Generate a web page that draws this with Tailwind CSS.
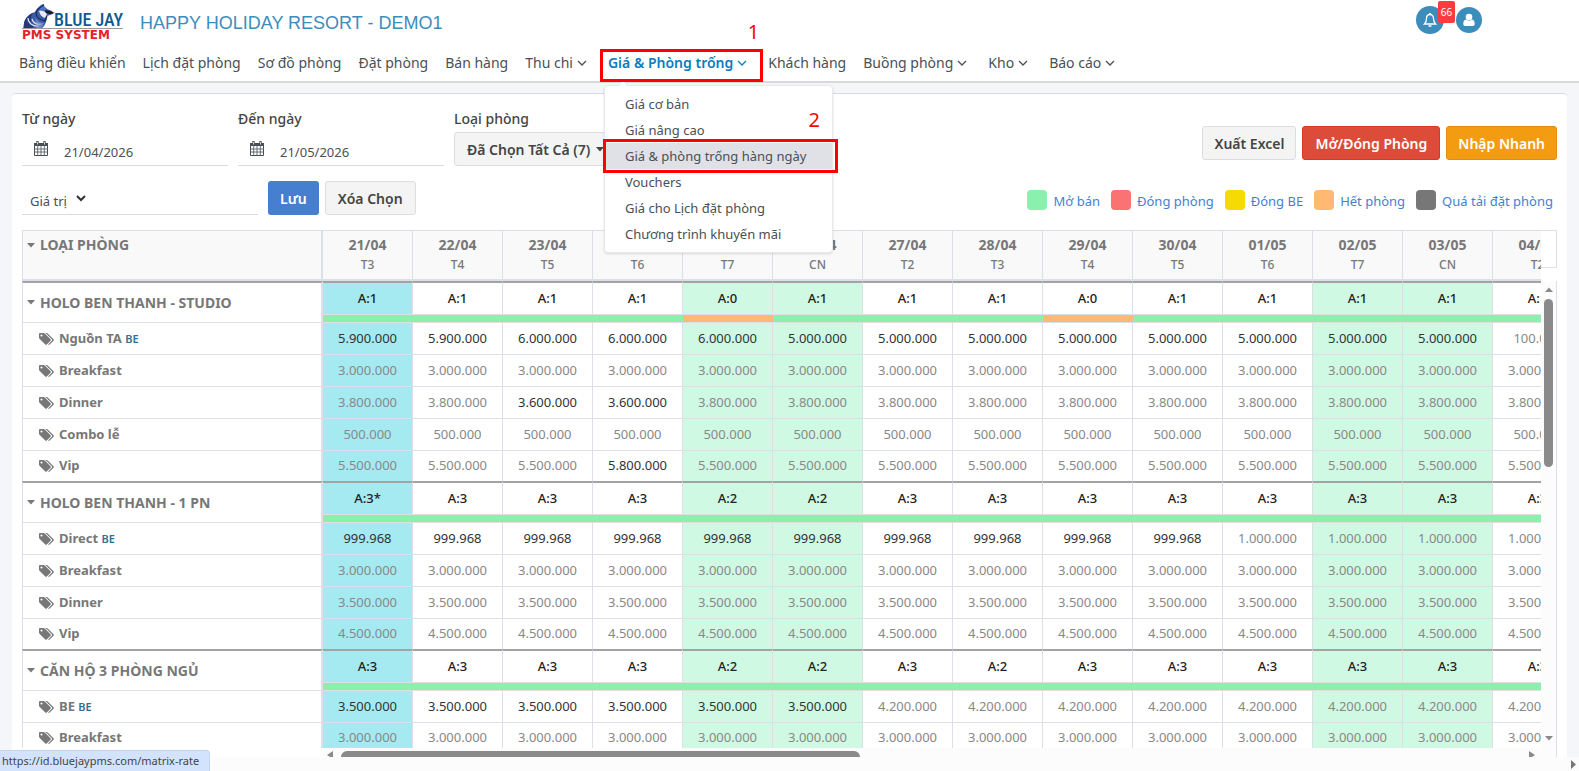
<!DOCTYPE html>
<html lang="vi">
<head>
    <meta charset="UTF-8">
    <meta name="viewport" content="width=device-width, initial-scale=1.0">
    <title>Giá &amp; phòng trống hàng ngày</title>
    <script src="https://cdn.jsdelivr.net/npm/@tailwindcss/browser@4"></script>
</head>
<body class="bg-[#f5f6fa] text-[#495057] font-['Noto_Sans',sans-serif] text-[13px]">
    <!-- Shared icons -->
    <svg class="hidden">
        <symbol id="chevron" viewBox="0 0 10 10"><path d="M1 3 5 7 9 3" fill="none" stroke="currentColor" stroke-width="1.300"/></symbol>
        <symbol id="caret" viewBox="0 0 8 5"><path d="M0 0h8L4 4.500z" fill="currentColor"/></symbol>
        <symbol id="calendar" viewBox="0 0 14 15">
            <path d="M.5 2.500h13v12H.5z" fill="#fff" stroke="currentColor"/>
            <path d="M0 2h14v3H0z" fill="currentColor"/>
            <path d="M3.500 0v4M10.500 0v4" stroke="currentColor" stroke-width="2.200"/>
            <path d="M3.500 1v2.500M10.500 1v2.500" stroke="#fff" stroke-width=".7"/>
            <path d="M3.700 5v9M7 5v9M10.300 5v9M1 8h12M1 11h12" stroke="currentColor" stroke-width=".8"/>
        </symbol>
        <symbol id="tags" viewBox="0 0 1920 1536">
            <path fill="currentColor" d="M448 320q0-53-37.500-90.500T320 192t-90.500 37.500T192 320t37.500 90.500T320 448t90.500-37.500T448 320zm1067 576q0 53-37 90l-491 492q-39 37-91 37-53 0-90-37L91 762q-38-37-64.500-101T0 544V128q0-52 38-90t90-38h416q53 0 117 26.500T763 91l715 714q37 39 37 91zm384 0q0 53-37 90l-491 492q-39 37-91 37-36 0-59-14t-53-45l470-470q37-37 37-90 0-52-37-91L923 91q-38-38-102-64.500T704 0h224q53 0 117 26.500T1147 91l715 714q37 39 37 91z"/>
        </symbol>
    </svg>

    <div class="h-screen overflow-hidden flex flex-col relative">
        <!-- Header -->
        <header class="bg-white border-b-2 border-[#d9d9d9] shrink-0">
            <div class="flex items-center h-11 pl-[22px] pr-[97px]">
                <a href="#" aria-label="Blue Jay PMS System">
                    <svg class="w-[102px] h-10 block overflow-visible" viewBox="0 0 102 40">
                        <path d="M22 2c-1 2 1 3 3 5l5 2 1 3-6 2c0 5-2 10-6 13H1l1-6c1-5 5-9 11-11 2-4 5-7 9-8z" fill="#3c5aa8"/>
                        <path d="M13 10c2-4 5-7 9-8-1 2 1 3 3 5l-3 2-5 1z" fill="#4f72c4"/>
                        <path d="M17 9c3-1 6 0 8 3l-2 4c-3-1-5-3-6-7z" fill="#e6ebf2"/>
                        <path d="m23 8 5 1 5 2-5 1-4-1z" fill="#1c1c1c"/>
                        <path d="M22 3c-3 2-7 4-8 8 0 4 4 7 9 8l2-5" fill="none" stroke="#1b2549" stroke-width="1.200"/>
                        <path d="M2 27V21c1-4 4-8 9-10-3 5-3 10 1 13l-3 3z" fill="#27397c"/>
                        <path d="M6 16c0 5 5 9 11 8M10 17c1 4 5 6 9 5" fill="none" stroke="#dbe5f6" stroke-width="1.200"/>
                        <path d="M13 15c2 4 5 6 9 6l-3 6h-6c2-3 1-7 0-12z" fill="#8ea2d2" fill-opacity=".6"/>
                        <text x="32" y="24" font-family="Roboto Condensed, Liberation Sans Narrow, Liberation Sans, sans-serif" font-size="18" font-weight="500" fill="#0b5a94">BLUE JAY</text>
                        <path d="M0 26.500h101" stroke="#9a9a9a"/>
                        <text x="0" y="37" font-family="DejaVu Sans, sans-serif" font-weight="bold" font-size="12" fill="#e8202c">PMS SYSTEM</text>
                    </svg>
                </a>
                <h1 class="ml-4 mt-0.5 font-['Liberation_Sans',sans-serif] text-[18px] text-[#3c8dbc]">HAPPY HOLIDAY RESORT - DEMO1</h1>
                <div class="ml-auto flex items-center gap-3 mb-1">
                    <button aria-label="Thông báo" class="relative size-7 rounded-full bg-[#3c8dbc] flex items-center justify-center">
                        <svg class="size-4" viewBox="0 0 16 16" fill="none" stroke="#fff" stroke-width="1.300"><path d="M2.500 12h11c-1.500-1.300-2-2.500-2-5.500C11.500 4 10 2.500 8 2.500S4.500 4 4.500 6.500c0 3-.5 4.200-2 5.500z"/><path d="M8 1v1.500M6.500 14h3" stroke-width="1.600"/></svg>
                        <span class="absolute left-[22px] -top-[5px] w-[17px] h-[22px] rounded-xs bg-[#ff3b3f] text-white text-[10px] leading-[22px] text-center">66</span>
                    </button>
                    <button aria-label="Tài khoản" class="size-[26px] rounded-full bg-[#3c8dbc] flex items-center justify-center">
                        <svg class="size-3.5" viewBox="0 0 14 14" fill="#fff"><circle cx="7" cy="4" r="3.300"/><path d="M4 6.500c2 1.500 4 1.500 6 0 2 .5 2.700 2 2.700 4.500 0 1.300-.7 2-1.700 2H3c-1 0-1.700-.7-1.700-2C1.300 8.500 2 7 4 6.500z"/></svg>
                    </button>
                </div>
            </div>

            <nav class="flex items-center h-[37px] pl-[19px] gap-[17px] text-[14px] leading-[21px] whitespace-nowrap">
                <a href="#">Bảng điều khiển</a>
                <a href="#">Lịch đặt phòng</a>
                <a href="#">Sơ đồ phòng</a>
                <a href="#">Đặt phòng</a>
                <a href="#">Bán hàng</a>
                <a href="#" class="flex items-center gap-1 pr-1">Thu chi <svg class="size-2.5"><use href="#chevron"/></svg></a>
                <div class="relative">
                    <a href="#" class="flex items-center gap-1 pr-1 font-semibold text-[#0a7cc1]">Giá &amp; Phòng trống <svg class="size-2.5"><use href="#chevron"/></svg></a>
                    <!-- Dropdown -->
                    <div class="absolute z-10 -left-1 top-[33px] w-[229px] py-[5px] bg-white border border-[#e9e9ec] rounded shadow-sm text-[13px] leading-[26px]">
                        <span class="absolute left-3.5 -top-1 size-2 rotate-45 bg-white border-l border-t border-[#e9e9ec]"></span>
                        <a href="#" class="block pl-5">Giá cơ bản</a>
                        <a href="#" class="block pl-5">Giá nâng cao</a>
                        <a href="#" class="relative block pl-5 bg-[#e0e1e6]">Giá &amp; phòng trống hàng ngày
                            <span class="absolute -left-[2px] -right-[6px] -top-1 -bottom-1 border-3 border-[#ff0000]"></span>
                            <span class="absolute right-3 -top-9 text-[20px] text-[#ff0000]">2</span>
                        </a>
                        <a href="#" class="block pl-5">Vouchers</a>
                        <a href="#" class="block pl-5">Giá cho Lịch đặt phòng</a>
                        <a href="#" class="block pl-5">Chương trình khuyến mãi</a>
                    </div>
                    <span class="absolute z-20 -left-2 -right-3 -top-[3px] h-[33px] border-3 border-[#ff0000]"></span>
                    <span class="absolute -right-2 -top-8 text-[20px] leading-6 text-[#ff0000]">1</span>
                </div>
                <a href="#">Khách hàng</a>
                <a href="#" class="flex items-center gap-1 pr-1">Buồng phòng <svg class="size-2.5"><use href="#chevron"/></svg></a>
                <a href="#" class="flex items-center gap-1 pr-1">Kho <svg class="size-2.5"><use href="#chevron"/></svg></a>
                <a href="#" class="flex items-center gap-1">Báo cáo <svg class="size-2.5"><use href="#chevron"/></svg></a>
            </nav>
        </header>

        <!-- Card -->
        <main class="flex-1 min-h-0 mx-3 mt-2.5 px-2.5 bg-white border-t border-[#d5d9e2] rounded-t flex flex-col">
            <div class="flex items-start gap-2.5 pt-3.5">
                <div class="w-[206px]">
                    <label for="from" class="block leading-[22px] font-medium text-[14px] text-[#444]">Từ ngày</label>
                    <div class="flex items-end h-9 border-b border-[#d9dbdf] pl-3 pb-[3px]">
                        <svg class="w-3.5 h-[15px] mb-1.5"><use href="#calendar"/></svg>
                        <input id="from" value="21/04/2026" class="ml-4 w-36 leading-5 text-[13px] outline-none">
                    </div>
                </div>
                <div class="w-[206px]">
                    <label for="to" class="block leading-[22px] font-medium text-[14px] text-[#444]">Đến ngày</label>
                    <div class="flex items-end h-9 border-b border-[#d9dbdf] pl-3 pb-[3px]">
                        <svg class="w-3.5 h-[15px] mb-1.5"><use href="#calendar"/></svg>
                        <input id="to" value="21/05/2026" class="ml-4 w-36 leading-5 text-[13px] outline-none">
                    </div>
                </div>
                <div>
                    <span class="block leading-[22px] font-medium text-[14px] text-[#444]">Loại phòng</span>
                    <button class="mt-0.5 flex items-center gap-1.5 h-[34px] px-3 bg-[#f4f4f4] border border-[#ddd] rounded-[3px] text-[14px] font-semibold text-[#444]">Đã Chọn Tất Cả (7) <svg class="w-2 h-[5px]"><use href="#caret"/></svg></button>
                </div>
                <div class="ml-auto mt-[18px] flex gap-1.5 text-[14px] font-semibold">
                    <button class="h-[34px] px-[11px] bg-[#f4f4f4] border border-[#ddd] rounded-[3px] text-[#444]">Xuất Excel</button>
                    <button class="h-[34px] px-3 bg-[#dd4b39] border border-[#d73925] rounded-[3px] text-white">Mở/Đóng Phòng</button>
                    <button class="h-[34px] px-[11px] bg-[#f39c12] border border-[#e08e0b] rounded-[3px] text-white">Nhập Nhanh</button>
                </div>
            </div>

            <div class="flex items-center pt-[15px] pb-[15px]">
                <div class="relative w-[236px] h-[34px] border-b border-[#d9dbdf]">
                    <select aria-label="Giá trị" class="appearance-none w-full h-full pl-2 pt-2 outline-none bg-transparent"><option>Giá trị</option></select>
                    <svg class="absolute left-[54px] top-3 size-2.5" viewBox="0 0 10 10"><path d="M1 3 5 7 9 3" fill="none" stroke="#333" stroke-width="2"/></svg>
                </div>
                <button class="ml-2.5 h-[34px] px-3 bg-[#467fd0] rounded-[3px] text-[14px] font-semibold text-white">Lưu</button>
                <button class="ml-1.5 h-[34px] px-3 bg-[#f4f4f4] border border-[#ddd] rounded-[3px] text-[14px] font-semibold text-[#444]">Xóa Chọn</button>
                <div class="ml-auto mt-2 pr-1 flex items-center gap-[11px] text-[#467fd0] text-[13px]">
                    <span class="flex items-center gap-1.5"><i class="size-5 mb-1 rounded bg-[#89f0ae]"></i>Mở bán</span>
                    <span class="flex items-center gap-1.5"><i class="size-5 mb-1 rounded bg-[#fa7272]"></i>Đóng phòng</span>
                    <span class="flex items-center gap-1.5"><i class="size-5 mb-1 rounded bg-[#f5da03]"></i>Đóng BE</span>
                    <span class="flex items-center gap-1.5"><i class="size-5 mb-1 rounded bg-[#ffb973]"></i>Hết phòng</span>
                    <span class="flex items-center gap-1.5"><i class="size-5 mb-1 rounded bg-[#777]"></i>Quá tải đặt phòng</span>
                </div>
            </div>

            <!-- Rate matrix -->
            <div class="flex-1 min-h-0 flex">
                <div class="flex-1 min-w-0 flex flex-col">
                    <div class="flex-1 min-h-0 overflow-hidden">
                        <table class="table-fixed w-[1561px] border-separate border-spacing-0">
                            <thead><tr id="days"></tr></thead>
                            <tbody id="rates"></tbody>
                        </table>
                    </div>
                    <div class="h-[9px] shrink-0 ml-[301px] overflow-hidden flex items-start pt-[3px] gap-2 pl-1 pr-1.5 bg-[#fcfcfc]">
                        <svg class="w-1.5 h-2 shrink-0 text-[#8a8a8a]" viewBox="0 0 6 8"><path d="M6 0v8L0 4z" fill="currentColor"/></svg>
                        <span class="w-[43%] h-2 shrink-0 rounded-t-md bg-[#8a8a8a]"></span>
                        <svg class="w-1.5 h-2 ml-auto shrink-0 text-[#8a8a8a]" viewBox="0 0 6 8"><path d="M0 0v8l6-4z" fill="currentColor"/></svg>
                    </div>
                </div>
                <div class="w-4 shrink-0 flex flex-col">
                    <div class="h-[38px] shrink-0 border border-l-0 border-[#dcdfe5]"></div>
                    <div class="mt-[13px] flex-1 min-h-0 flex flex-col items-center justify-between pt-1.5 pb-4 bg-[#fcfcfc] border-r border-[#dcdfe5]">
                        <svg class="w-2 h-[5px] rotate-180 text-[#8a8a8a]"><use href="#caret"/></svg>
                        <span class="w-[9px] h-[168px] mt-[7px] mb-auto rounded-full bg-[#8a8a8a]"></span>
                        <svg class="w-2 h-[5px] text-[#8a8a8a]"><use href="#caret"/></svg>
                    </div>
                </div>
            </div>
        </main>

        <!-- Page scrollbar -->
        <div class="h-3.5 shrink-0 bg-[#fcfcfc] flex items-center justify-end pr-[3px]">
            <svg class="w-[5px] h-[9px]" viewBox="0 0 5 9"><path d="M0 0v9l5-4.500z" fill="#777"/></svg>
        </div>
        <div class="absolute left-0 bottom-0 h-[21px] pl-0.5 pr-2.5 bg-[#d3e3fd] border-t border-r border-[#c4d3ee] rounded-tr text-[11px] leading-5 text-[#444]">https://id.bluejaypms.com/matrix-rate</div>
    </div>

    <script>
        const days = [
            ['21/04', 'T3'], ['22/04', 'T4'], ['23/04', 'T5'], ['24/04', 'T6'], ['25/04', 'T7'],
            ['26/04', 'CN'], ['27/04', 'T2'], ['28/04', 'T3'], ['29/04', 'T4'], ['30/04', 'T5'],
            ['01/05', 'T6'], ['02/05', 'T7'], ['03/05', 'CN'], ['04/05', 'T2']
        ];
        const fill = (value, custom = {}) => days.map((_, i) => custom[i] ? { v: custom[i], set: true } : { v: value });
        const range = (from, to, value) => Object.fromEntries(Array.from({ length: to - from + 1 }, (_, i) => [from + i, value]));

        const groups = [
            {
                name: 'HOLO BEN THANH - STUDIO',
                rooms: ['1', '1', '1', '1', '0', '1', '1', '1', '0', '1', '1', '1', '1', '1'],
                rates: [
                    { name: 'Nguồn TA', be: true, prices: fill('100.000', { ...range(0, 1, '5.900.000'), ...range(2, 4, '6.000.000'), ...range(5, 12, '5.000.000') }) },
                    { name: 'Breakfast', prices: fill('3.000.000') },
                    { name: 'Dinner', prices: fill('3.800.000', range(2, 3, '3.600.000')) },
                    { name: 'Combo lễ', prices: fill('500.000') },
                    { name: 'Vip', prices: fill('5.500.000', { 3: '5.800.000' }) }
                ]
            },
            {
                name: 'HOLO BEN THANH - 1 PN',
                rooms: ['3*', '3', '3', '3', '2', '2', '3', '3', '3', '3', '3', '3', '3', '3'],
                rates: [
                    { name: 'Direct', be: true, prices: fill('1.000.000', range(0, 9, '999.968')) },
                    { name: 'Breakfast', prices: fill('3.000.000') },
                    { name: 'Dinner', prices: fill('3.500.000') },
                    { name: 'Vip', prices: fill('4.500.000') }
                ]
            },
            {
                name: 'CĂN HỘ 3 PHÒNG NGỦ',
                rooms: ['3', '3', '3', '3', '2', '2', '3', '2', '3', '3', '3', '3', '3', '3'],
                rates: [
                    { name: 'BE', be: true, prices: fill('4.200.000', range(0, 5, '3.500.000')) },
                    { name: 'Breakfast', prices: fill('3.000.000') }
                ]
            }
        ];

        const caret = '<svg class="w-2 h-[5px] shrink-0"><use href="#caret"/></svg>';
        const dayBg = i => i === 0 ? 'bg-[#a5eaf0]' : ['T7', 'CN'].includes(days[i][1]) ? 'bg-[#d0f9e4]' : 'bg-white';

        document.getElementById('days').innerHTML = `
            <th class="w-[301px] h-[51px] p-0 pl-1 pt-1 align-top text-left bg-[#f9f9f9] border border-r-2 border-b-2 border-[#dcdfe5] text-[#777]">
                <div class="flex items-center gap-[5px] leading-5 text-[14px] font-bold">${caret}LOẠI PHÒNG</div>
            </th>
            ${days.map(([date, day]) => `
                <th class="w-[90px] h-[51px] p-0 pt-1 align-top bg-[#f9f9f9] border-t border-r border-b-2 border-[#dcdfe5] text-[#777]">
                    <div class="leading-5 text-[14px] font-bold">${date}</div>
                    <div class="leading-5 text-[12px] font-medium">${day}</div>
                </th>`).join('')}`;

        document.getElementById('rates').innerHTML = groups.map(group => `
            <tr>
                <th rowspan="2" class="p-0 pl-1 text-left border-t-2 border-t-[#a3a3a3] border-l border-r-2 border-b border-[#dcdfe5] text-[#777]">
                    <div class="flex items-center gap-[5px] leading-5 text-[14px] font-bold">${caret}${group.name}</div>
                </th>
                ${group.rooms.map((n, i) => `
                    <td class="h-[34px] p-0 text-center font-medium text-[#222] border-t-2 border-t-[#a3a3a3] border-r border-b border-[#dcdfe5] ${dayBg(i)}">A:${n}</td>`).join('')}
            </tr>
            <tr>
                ${group.rooms.map(n => `<td class="h-2 p-0 border-b border-[#dcdfe5] ${n === '0' ? 'bg-[#ffb973]' : 'bg-[#89f0ae]'}"></td>`).join('')}
            </tr>
            ${group.rates.map((rate, r) => {
                const edge = r === group.rates.length - 1 ? 'h-[30px]' : 'h-8 border-b';
                return `
                <tr>
                    <th class="${edge} p-0 pl-4 text-left border-l border-r-2 border-[#dcdfe5] text-[#777]">
                        <div class="flex items-center gap-[5px] font-bold"><svg class="w-[15px] h-3"><use href="#tags"/></svg><span>${rate.name}${rate.be ? ' <small class="text-[11px] font-semibold text-[#31708f]">BE</small>' : ''}</span></div>
                    </th>
                    ${rate.prices.map((p, i) => `
                        <td class="${edge} p-0 text-center border-r border-[#dcdfe5] ${dayBg(i)} ${p.set ? 'text-[#333]' : 'text-[#888]'}">${p.v}</td>`).join('')}
                </tr>`;
            }).join('')}`).join('');
    </script>
</body>
</html>
